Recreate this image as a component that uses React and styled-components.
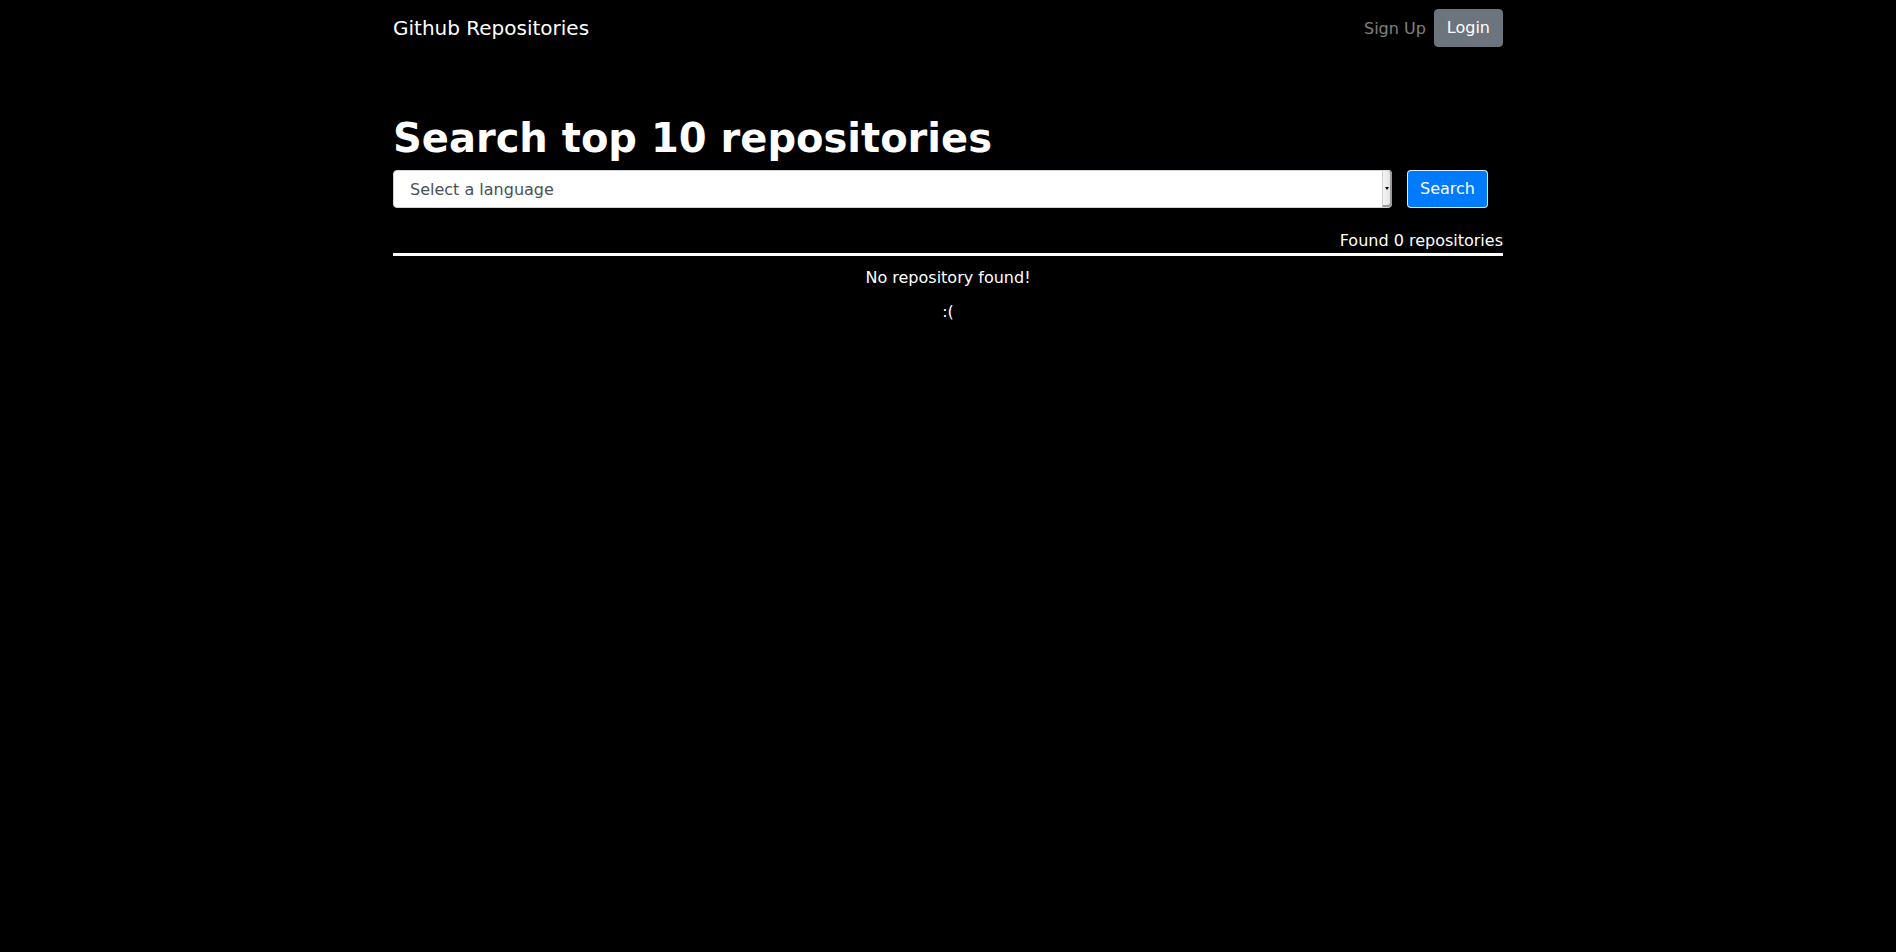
import React, { useState } from "react";
import styled, { createGlobalStyle } from "styled-components";

const GlobalStyle = createGlobalStyle`
  html, body {
    margin: 0;
    padding: 0;
    background: #000;
    color: #fff;
    font-family: "DejaVu Sans", "Liberation Sans", sans-serif;
    font-size: 16px;
    line-height: 1.5;
  }
  #root {
    min-height: 952px;
    background: #000;
  }
  * { box-sizing: border-box; }
`;

const Container = styled.div`
  width: 1140px;
  margin: 0 auto;
  padding: 0 15px;
`;

const Navbar = styled.nav`
  display: flex;
  align-items: center;
  justify-content: space-between;
  padding: 7px 0 9px;
`;

const Brand = styled.a`
  font-size: 20px;
  line-height: 30px;
  color: #fff;
  text-decoration: none;
`;

const NavLinks = styled.div`
  display: flex;
  align-items: center;
`;

const NavLink = styled.a`
  color: rgba(255, 255, 255, 0.5);
  text-decoration: none;
  padding: 8px 8px;
  margin-top: 2px;
`;

const LoginButton = styled.button`
  font-family: inherit;
  font-size: 16px;
  line-height: 24px;
  padding: 6px 12px;
  border: 1px solid #6c757d;
  border-radius: 4px;
  background: #6c757d;
  color: #fff;
  cursor: pointer;
`;

const Title = styled.h1`
  margin: 56px 0 8px;
  font-size: 40px;
  line-height: 1.2;
  font-weight: 700;
`;

const SearchForm = styled.form`
  display: flex;
  align-items: center;
  gap: 15px;
  padding-right: 15px;
`;

const SelectWrap = styled.div`
  position: relative;
  flex: 1;
  display: flex;
`;

const LanguageSelect = styled.select`
  flex: 1;
  height: 38px;
  padding: 6px 12px 6px 16px;
  font-family: inherit;
  font-size: 16px;
  color: #495057;
  background: #fff;
  border: 1px solid #ced4da;
  border-radius: 4px;
  appearance: none;
  -webkit-appearance: none;
`;

const DropButton = styled.span`
  position: absolute;
  top: 0;
  right: 0;
  bottom: 1px;
  width: 10px;
  background: linear-gradient(to right, #f4f4f4, #e4e4e4);
  border-left: 1px solid #cfcfcf;
  border-right: 2px solid #9a9a9a;
  border-bottom: 2px solid #9a9a9a;
  border-top: 1px solid #d8d8d8;
  border-radius: 0 4px 4px 0;
  display: flex;
  align-items: center;
  justify-content: center;
  pointer-events: none;

  &::after {
    content: "";
    border-left: 2.5px solid transparent;
    border-right: 2.5px solid transparent;
    border-top: 3px solid #000;
  }
`;

const SearchButton = styled.button`
  height: 38px;
  font-family: inherit;
  font-size: 16px;
  line-height: 24px;
  padding: 6px 12px;
  color: #fff;
  background: #007bff;
  border: 1px solid rgba(255, 255, 255, 0.85);
  border-radius: 4px;
  cursor: pointer;
`;

const ResultCount = styled.div`
  margin-top: 21px;
  text-align: right;
  border-bottom: 3px solid #fff;
`;

const Empty = styled.div`
  text-align: center;
  padding-top: 10px;

  p {
    margin: 0 0 10px;
  }
`;

const languages = ["JavaScript", "Python", "Java", "Go", "Ruby", "TypeScript", "C++", "Rust"];

export default function App() {
  const [language, setLanguage] = useState("");
  const repos = [];

  return (
    <>
      <GlobalStyle />
      <Container>
        <Navbar>
          <Brand href="#">Github Repositories</Brand>
          <NavLinks>
            <NavLink href="#">Sign Up</NavLink>
            <LoginButton type="button">Login</LoginButton>
          </NavLinks>
        </Navbar>

        <Title>Search top 10 repositories</Title>
        <SearchForm onSubmit={(e) => e.preventDefault()}>
          <SelectWrap>
            <LanguageSelect value={language} onChange={(e) => setLanguage(e.target.value)}>
              <option value="">Select a language</option>
              {languages.map((l) => (
                <option key={l} value={l}>
                  {l}
                </option>
              ))}
            </LanguageSelect>
            <DropButton />
          </SelectWrap>
          <SearchButton type="submit">Search</SearchButton>
        </SearchForm>

        <ResultCount>Found {repos.length} repositories</ResultCount>
        {repos.length === 0 ? (
          <Empty>
            <p>No repository found!</p>
            <p>:(</p>
          </Empty>
        ) : null}
      </Container>
    </>
  );
}
